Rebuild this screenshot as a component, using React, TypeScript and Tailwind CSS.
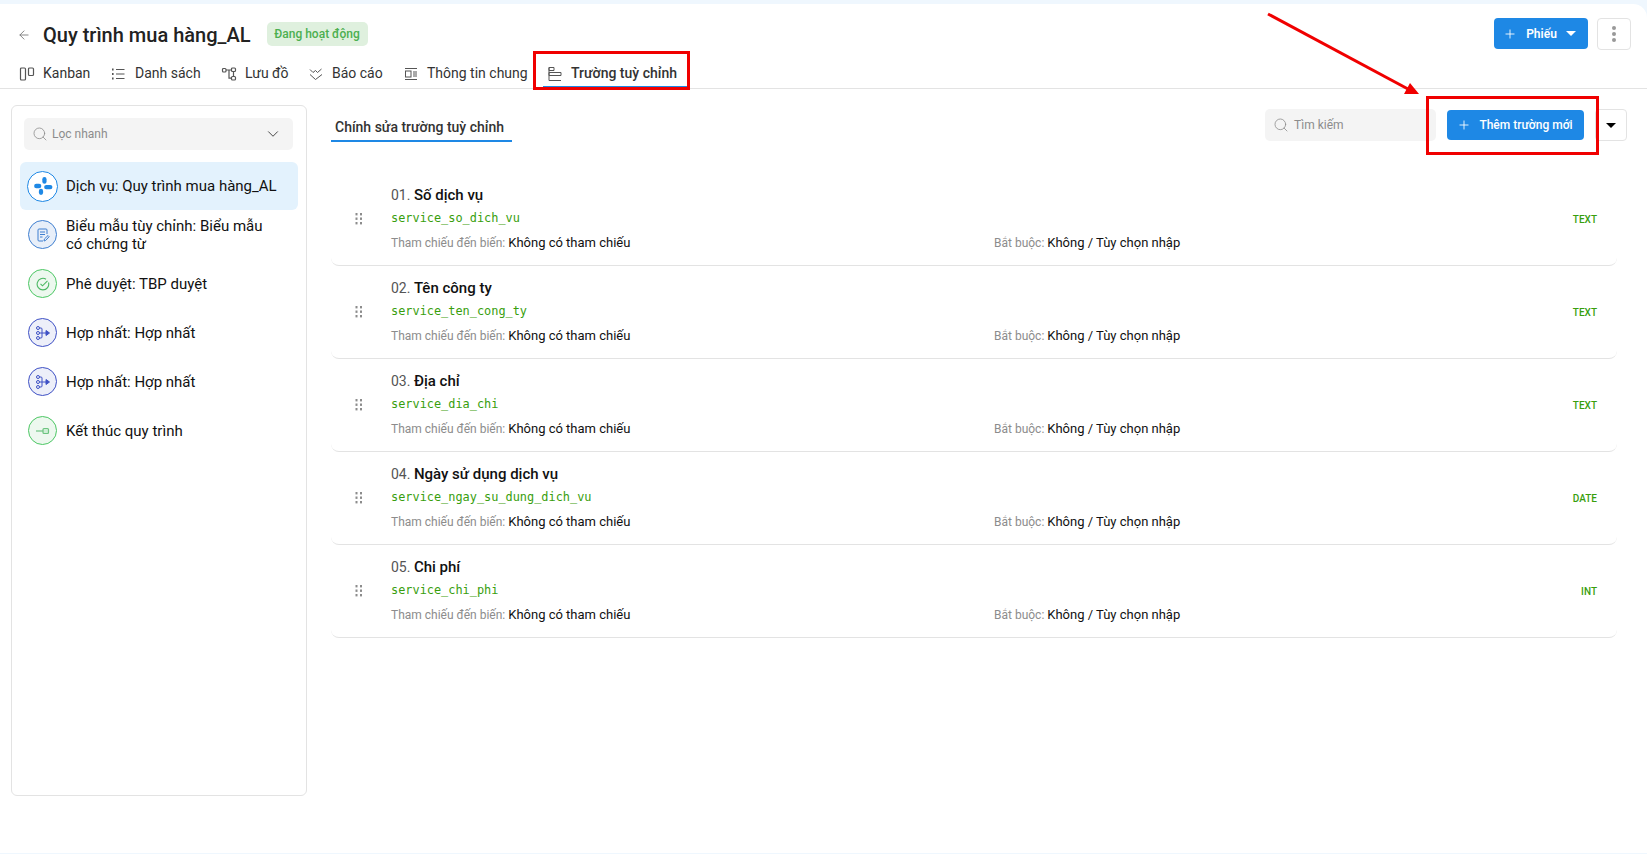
import React from "react";
import { ArrowLeft, Plus, Search, ChevronDown } from "lucide-react";

const S = { fill: "none", stroke: "currentColor", strokeWidth: 1.2 } as const;

const KanbanIcon = () => (
  <svg width="16" height="16" viewBox="0 0 16 16" {...S}>
    <rect x="1.500" y="2" width="5" height="12" rx="1" />
    <rect x="9.500" y="2" width="5" height="7.500" rx="1" />
  </svg>
);
const ListIcon = () => (
  <svg width="16" height="16" viewBox="0 0 16 16" {...S}>
    <path d="M5 3.500h8.500M5 8h8.500M5 12.500h8.500" />
    <path d="M1 3.500h1.600M1 8h1.600M1 12.500h1.600" strokeWidth="1.800" />
  </svg>
);
const FlowIcon = () => (
  <svg width="16" height="16" viewBox="0 0 16 16" {...S}>
    <rect x="1.500" y="2.500" width="3.500" height="3.500" rx="1" />
    <rect x="10.500" y="2" width="4" height="3.500" rx="1" />
    <rect x="10.500" y="10.500" width="4" height="3.500" rx="1" />
    <path d="M5 4h5.500M8 4v8.200h2.500M12.500 5.500v5" />
  </svg>
);
const ReportIcon = () => (
  <svg width="16" height="16" viewBox="0 0 16 16" {...S} strokeWidth={1}>
    <path d="M2 3.500l3 3 2.500-2 2 2 4-3.500" />
    <path d="M2 8.500l5.500 5L14 8.500" />
  </svg>
);
const InfoIcon = () => (
  <svg width="16" height="16" viewBox="0 0 16 16" {...S} strokeWidth={1}>
    <path d="M2 2.500h12M2 13.500h12" />
    <rect x="2.500" y="5" width="5.500" height="6" />
    <path d="M10 6h4M10 8h4M10 10h4" />
  </svg>
);
const FieldIcon = () => (
  <svg width="16" height="16" viewBox="0 0 16 16" {...S} strokeWidth={1}>
    <path d="M2 1.500h5v3H2z" />
    <path d="M2 6.500h12v3H2z" />
    <path d="M2 1.500v13h12" />
  </svg>
);

const ServiceGlyph = () => (
  <svg width="20" height="20" viewBox="0 0 18 18" fill="#1e88e5">
    <rect x="1" y="7" width="6.500" height="4" rx="2" />
    <rect x="10" y="8" width="7.500" height="4" rx="2" />
    <rect x="8.400" y="1" width="3.800" height="6" rx="1.900" />
    <rect x="5.300" y="11.500" width="3.800" height="5.500" rx="1.900" />
  </svg>
);
const FormGlyph = () => (
  <svg width="14" height="14" viewBox="0 0 14 14" fill="none" stroke="#3f7fd0" strokeWidth="1">
    <path d="M11 6V2a1 1 0 0 0-1-1H3a1 1 0 0 0-1 1v10a1 1 0 0 0 1 1h4" />
    <path d="M4 4h5M4 6.500h5M4 9h2.500" />
    <path d="M8 13l.4-2L12 7.500l1.200 1.200L9.700 12.400z" />
  </svg>
);
const CheckGlyph = () => (
  <svg width="14" height="14" viewBox="0 0 14 14" fill="none" stroke="#4cb963" strokeWidth="1.100">
    <path d="M12.500 5.500A5.800 5.800 0 1 1 10 2.200" />
    <path d="M4.500 6.800l2 2 5-5" />
  </svg>
);
const MergeGlyph = () => (
  <svg width="16" height="16" viewBox="0 0 16 16" fill="none" stroke="#3f51c5" strokeWidth="1">
    <circle cx="3" cy="3" r="1.500" />
    <circle cx="3" cy="8" r="1.500" />
    <circle cx="3" cy="13" r="1.500" />
    <path d="M4.500 3H6a1 1 0 0 1 1 1v8a1 1 0 0 1-1 1H4.500M4.500 8H12" />
    <path d="M11 5.500L14.500 8 11 10.500z" fill="#3f51c5" />
  </svg>
);
const EndGlyph = () => (
  <svg width="16" height="16" viewBox="0 0 16 16" fill="none" stroke="#6cc47f" strokeWidth="1.200">
    <path d="M1 8h7" />
    <rect x="8" y="5.500" width="5.500" height="5" rx="1" fill="#cfeed6" />
  </svg>
);

const Grip = () => (
  <svg width="8" height="12" viewBox="0 0 8 12" fill="#8c8c8c" className="block">
    {[0, 4.500, 9].map((y) => (
      <React.Fragment key={y}>
        <rect x="0.500" y={y} width="2" height="2.400" />
        <rect x="5" y={y} width="2" height="2.400" />
      </React.Fragment>
    ))}
  </svg>
);

const tabs = [
  { label: "Kanban", icon: <KanbanIcon />, w: "w-[92px]" },
  { label: "Danh sách", icon: <ListIcon />, w: "w-[110px]" },
  { label: "Lưu đồ", icon: <FlowIcon />, w: "w-[87px]" },
  { label: "Báo cáo", icon: <ReportIcon />, w: "w-[95px]" },
  { label: "Thông tin chung", icon: <InfoIcon />, w: "w-[140px]" },
];

const fields = [
  { no: "01.", name: "Số dịch vụ", code: "service_so_dich_vu", type: "TEXT" },
  { no: "02.", name: "Tên công ty", code: "service_ten_cong_ty", type: "TEXT" },
  { no: "03.", name: "Địa chỉ", code: "service_dia_chi", type: "TEXT" },
  { no: "04.", name: "Ngày sử dụng dịch vụ", code: "service_ngay_su_dung_dich_vu", type: "DATE" },
  { no: "05.", name: "Chi phí", code: "service_chi_phi", type: "INT" },
];

const Circle = ({ cls, children }: { cls: string; children: React.ReactNode }) => (
  <div className={`flex h-[29px] w-[29px] shrink-0 items-center justify-center rounded-full border ${cls}`}>{children}</div>
);

const nav = [
  { text: "Biểu mẫu tùy chỉnh: Biểu mẫu có chứng từ", icon: <Circle cls="border-[#3f7fd0] bg-[#e8eff9]"><FormGlyph /></Circle> },
  { text: "Phê duyệt: TBP duyệt", icon: <Circle cls="border-[#4cc764] bg-[#edf8ef]"><CheckGlyph /></Circle> },
  { text: "Hợp nhất: Hợp nhất", icon: <Circle cls="border-[#3f51c5] bg-[#edeff9]"><MergeGlyph /></Circle> },
  { text: "Hợp nhất: Hợp nhất", icon: <Circle cls="border-[#3f51c5] bg-[#edeff9]"><MergeGlyph /></Circle> },
  { text: "Kết thúc quy trình", icon: <Circle cls="border-[#4cc764] bg-[#edf8ef]"><EndGlyph /></Circle> },
];

export default function App() {
  return (
    <div className="relative h-[854px] w-[1647px] overflow-hidden bg-[#eff7fe] pt-[4px] pb-[1px] font-['Roboto',sans-serif] text-[14px] text-[#111]">
      <div className="flex h-full flex-col rounded-tr-[14px] bg-white">
        {/* Header */}
        <div className="flex h-[85px] shrink-0 flex-col border-b border-[#e3e3e3]">
          <div className="flex h-[53px] items-center pl-[17px] pr-[16px] pt-[8px]">
            <ArrowLeft size={14} className="text-[#777]" strokeWidth={1.5} />
            <span className="ml-[12px] text-[20px] font-medium leading-[26px] text-[#222]">Quy trình mua hàng_AL</span>
            <span className="mb-[2px] ml-[16px] flex h-[24px] w-[101px] items-center justify-center rounded-[5px] bg-[#dff0de] text-[12px] font-medium text-[#4caf50]">Đang hoạt động</span>
            <div className="mb-[2px] ml-auto flex items-center gap-[9px]">
              <button className="flex h-[31px] w-[94px] items-center justify-center gap-[9px] rounded-[4px] bg-[#1e88e5] pr-[3px] text-[12px] font-semibold text-white">
                <Plus size={14} strokeWidth={1.5} />
                <span>Phiếu</span>
                <span className="h-0 w-0 border-x-[5px] border-t-[5px] border-x-transparent border-t-white" />
              </button>
              <button className="flex h-[32px] w-[34px] flex-col items-center justify-center gap-[2px] rounded-[4px] border border-[#e3e3e3] bg-white">
                <span className="h-[4px] w-[4px] rounded-full bg-[#999]" />
                <span className="h-[4px] w-[4px] rounded-full bg-[#999]" />
                <span className="h-[4px] w-[4px] rounded-full bg-[#999]" />
              </button>
            </div>
          </div>
          <div className="flex h-[31px] items-center pl-[19px] pt-[2px] text-[#333]">
            {tabs.map((t) => (
              <div key={t.label} className={`flex items-center gap-[8px] ${t.w} shrink-0`}>
                <span className="text-[#555]">{t.icon}</span>
                <span className="whitespace-nowrap">{t.label}</span>
              </div>
            ))}
            <div className="flex h-full w-[147px] items-center gap-[8px] border-b-2 border-[#1e88e5] pl-[4px] pt-[2px]">
              <span className="text-[#555]"><FieldIcon /></span>
              <span className="whitespace-nowrap font-medium">Trường tuỳ chỉnh</span>
            </div>
          </div>
        </div>

        {/* Body */}
        <div className="flex min-h-0 flex-1 pt-[16px] pl-[11px] pr-[20px]">
          <aside className="h-[691px] w-[296px] shrink-0 rounded-[6px] border border-[#e3e3e3] px-[8px] pt-[12px]">
            <div className="ml-[4px] mr-[5px] flex h-[32px] items-center rounded-[5px] bg-[#f4f4f4] pl-[8px] pr-[11px] text-[12px] text-[#8c8c8c]">
              <Search size={16} strokeWidth={1.2} className="text-[#8c8c8c]" />
              <span className="ml-[4px]">Lọc nhanh</span>
              <ChevronDown size={18} strokeWidth={1.3} className="ml-auto text-[#444]" />
            </div>
            <div className="mt-[12px] flex h-[48px] items-center gap-[8px] rounded-[6px] bg-[#e3f2fd] px-[7px]">
              <div className="flex h-[31px] w-[31px] shrink-0 items-center justify-center rounded-full border border-[#1e88e5] bg-white">
                <ServiceGlyph />
              </div>
              <span className="text-[15px] leading-[18px]">Dịch vụ: Quy trình mua hàng_AL</span>
            </div>
            <div className="flex flex-col">
              {nav.map((n, i) => (
                <div key={i} className="flex h-[49px] items-center gap-[9px] pl-[8px] pr-[24px]">
                  {n.icon}
                  <span className="text-[15px] leading-[18px]">{n.text}</span>
                </div>
              ))}
            </div>
          </aside>

          <main className="ml-[24px] min-w-0 flex-1">
            <div className="flex h-[41px] items-start">
              <div className="flex h-[37px] w-[181px] items-end border-b-2 border-[#1e88e5] pb-[3px] pl-[4px]">
                <span className="font-medium leading-[20px] text-[#333]">Chính sửa trường tuỳ chỉnh</span>
              </div>
              <div className="ml-auto flex items-start">
                <div className="mt-[4px] flex h-[32px] w-[171px] items-center rounded-[5px] bg-[#f4f4f4] pl-[8px] text-[12px] text-[#8c8c8c]">
                  <Search size={16} strokeWidth={1.2} />
                  <span className="ml-[5px]">Tìm kiếm</span>
                </div>
                <button className="ml-[11px] mt-[5px] flex h-[30px] w-[137px] items-center justify-center gap-[8px] rounded-[4px] bg-[#1e88e5] pr-[1px] text-[12px] font-medium text-white">
                  <Plus size={14} strokeWidth={1.5} />
                  <span>Thêm trường mới</span>
                </button>
                <button className="ml-[11px] mt-[4px] flex h-[32px] w-[32px] items-center justify-center rounded-[4px] border border-[#e3e3e3] bg-white">
                  <span className="h-0 w-0 border-x-[5px] border-t-[5px] border-x-transparent border-t-black" />
                </button>
              </div>
            </div>
            <div className="mr-[10px] mt-[27px] flex flex-col">
              {fields.map((f) => (
                <div key={f.no} className="flex h-[93px] items-center rounded-b-[8px] border-b border-[#e3e3e3] pl-[24px] pr-[20px]">
                  <span className="mb-[1px] w-[36px] shrink-0"><Grip /></span>
                  <div className="flex flex-1 flex-col pb-[2px]">
                    <div className="leading-[20px]">
                      <span className="text-[#555]">{f.no} </span>
                      <span className="text-[15px] font-medium text-[#111]">{f.name}</span>
                    </div>
                    <div className="mt-[4px] font-['DejaVu_Sans_Mono',monospace] text-[11.900px] leading-[18px] text-[#389e0d]">{f.code}</div>
                    <div className="mt-[7px] flex text-[13px] leading-[18px]">
                      <div className="w-[603px] shrink-0"><span className="text-[12px] text-[#8c8c8c]">Tham chiếu đến biến: </span>Không có tham chiếu</div>
                      <div><span className="text-[12px] text-[#8c8c8c]">Bắt buộc: </span>Không / Tùy chọn nhập</div>
                    </div>
                  </div>
                  <span className="mt-[1px] text-[10px] font-medium text-[#389e0d]">{f.type}</span>
                </div>
              ))}
            </div>
          </main>
        </div>
      </div>

      {/* Annotations drawn over the screenshot */}
      <div className="pointer-events-none absolute left-[533px] top-[51px] h-[39px] w-[157px] border-[3px] border-[#f00000]" />
      <div className="pointer-events-none absolute left-[1426px] top-[96px] h-[59px] w-[173px] border-[3px] border-[#f00000]" />
      <svg className="pointer-events-none absolute left-0 top-0" width="1647" height="854">
        <path d="M1268 14L1408 89" stroke="#f00000" strokeWidth="3" />
        <path d="M1419 94L1404 94L1410 83z" fill="#f00000" />
      </svg>
    </div>
  );
}
